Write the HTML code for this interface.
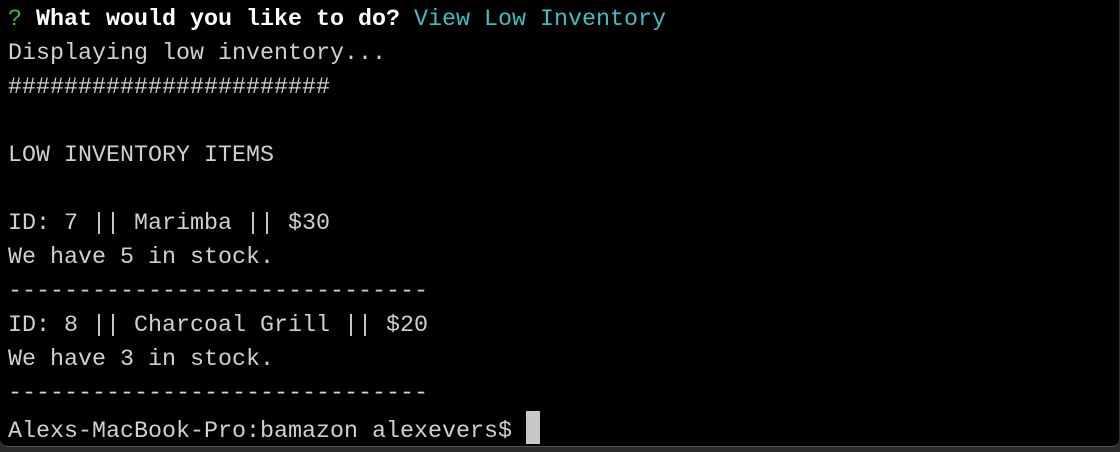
<!DOCTYPE html>
<html><head><style>
html,body{margin:0;padding:0;background:#2b2b2b;}
.win{position:absolute;left:0;top:0;width:1119px;height:446px;background:#000;border-bottom:1px solid #555;border-right:1px solid #333;border-bottom-left-radius:8px;border-bottom-right-radius:8px;overflow:hidden}
pre{margin:0;padding:3px 0 0 8px;font-family:"Liberation Mono","DejaVu Sans Mono",monospace;font-size:23.33px;line-height:34px;color:#d0d0d0;}
.g{color:#3fbf3f}.b{color:#fff;font-weight:bold}.c{color:#3fbfbf}
.cur{display:inline-block;width:14px;height:33px;background:#c8c8c8;vertical-align:-7px}
</style></head><body><div class="win"><pre><span class="g">?</span> <span class="b">What would you like to do?</span> <span class="c">View Low Inventory</span>
Displaying low inventory...
#######################

LOW INVENTORY ITEMS

ID: 7 || Marimba || $30
We have 5 in stock.
------------------------------
ID: 8 || Charcoal Grill || $20
We have 3 in stock.
------------------------------
Alexs-MacBook-Pro:bamazon alexevers$ <span class="cur"></span></pre></div></body></html>
